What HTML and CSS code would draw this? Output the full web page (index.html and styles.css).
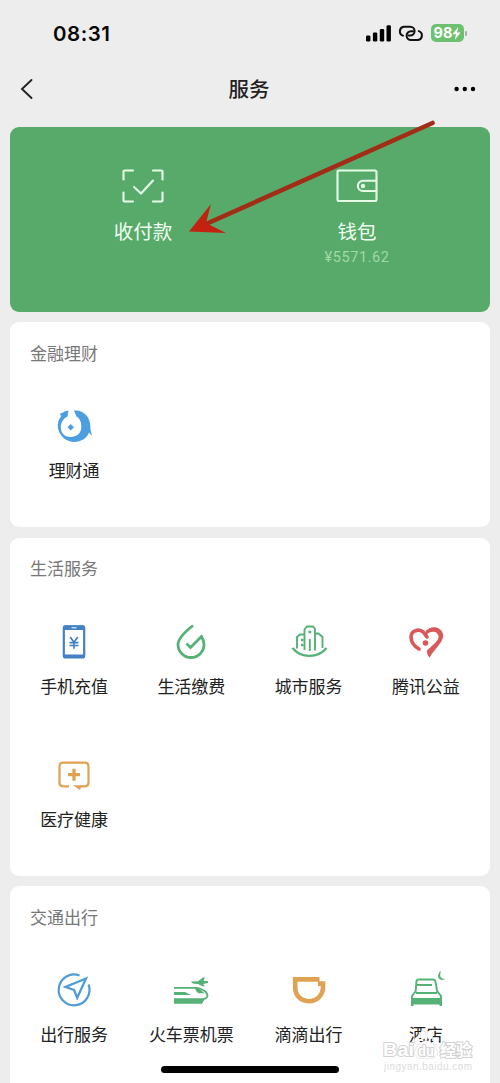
FILE: index.html
```html
<!DOCTYPE html>
<html lang="zh-CN">
<head>
<meta charset="utf-8">
<title>服务</title>
<link rel="stylesheet" href="styles.css">
</head>
<body>
<div class="screen">
  <header class="status">
    <span class="time">08:31</span>
    <div class="indicators">
      <svg class="signal" width="26" height="17" viewBox="0 0 26 17"><rect x="0" y="10.5" width="4.4" height="6" rx="1.3"/><rect x="6.9" y="7.5" width="4.4" height="9" rx="1.3"/><rect x="13.8" y="4" width="4.4" height="12.5" rx="1.3"/><rect x="20.5" y="0.3" width="4.4" height="16.2" rx="1.3"/></svg>
      <svg class="link" width="26" height="17" viewBox="0 0 26 17"><path d="M5 10.6A4.6 4.6 0 0 1 5.8 1.7H12.2A4.4 4.4 0 0 1 12.2 10.5H10.5"/><path d="M20.8 6.1A4.6 4.6 0 0 1 20 15H13A4.4 4.4 0 0 1 13 6.2H15"/></svg>
      <span class="battery"><span>98</span><svg width="9" height="13" viewBox="0 0 9 13"><path d="M6.2 0L0.4 7.2H4L2.8 13L8.6 5.6H5Z"/></svg></span><i class="nub"></i>
    </div>
  </header>
  <nav class="nav">
    <svg width="14" height="22" viewBox="0 0 14 22"><path class="back" d="M11.5 2L2 11L11.5 20"/></svg>
    <h1>服务</h1>
    <svg width="22" height="6" viewBox="0 0 22 6"><circle cx="2.6" cy="3" r="2.2"/><circle cx="10.8" cy="3" r="2.2"/><circle cx="19" cy="3" r="2.2"/></svg>
  </nav>
  <main class="cards">
    <section class="pay">
      <div class="pay-item">
        <svg width="44" height="36" viewBox="-22 -18 44 36"><path d="M-19.5 -6.5V-14.5Q-19.5 -15.5 -18.5 -15.5H-10M10 -15.5H18.5Q19.5 -15.5 19.5 -14.5V-6.5M19.5 6.5V14.5Q19.5 15.5 18.5 15.5H10M-10 15.5H-18.5Q-19.5 15.5 -19.5 14.5V6.5M-9 1L-2 7.5L10 -5.5"/></svg>
        <span class="pay-name">收付款</span>
      </div>
      <div class="pay-item">
        <svg width="44" height="36" viewBox="-22 -18 44 36"><rect x="-19.5" y="-15.5" width="39" height="30.5" rx="1.5"/><path d="M19 -5.2H6A5 5 0 0 0 6 5H19"/><circle class="dot" cx="6" cy="0" r="2.2"/></svg>
        <span class="pay-name">钱包</span>
        <span class="balance">¥5571.62</span>
      </div>
    </section>
    <section class="card">
      <h2>金融理财</h2>
      <div class="grid">
        <div class="item">
          <svg class="icon" viewBox="-22 -22 44 44"><path fill="#4b9fe0" d="M-5.5 -15.3C-9 -15.5 -11 -13 -14 -12.5L-13 -9.5C-16 -6 -17 -1 -15.5 4C-13.5 11 -7 16 0 16C7.5 16 13.5 11.5 15 6.5L18 10C17.5 7 16.3 4.5 16.3 0C16.3 -9 9 -16.5 0 -15.3L2.5 -9.5C6 -7.5 7.5 -3.5 7.3 1.5C7 7.5 2.5 11 -3.5 11C-9.5 11 -13 7 -13.2 1.5C-13.3 -3.5 -10.5 -7.5 -6.5 -9.5Z"/><path fill="#4b9fe0" d="M-3.3 -2L0 1.3L-3.3 4.6L-6.6 1.3Z"/></svg>
          <span>理财通</span>
        </div>
      </div>
    </section>
    <section class="card">
      <h2>生活服务</h2>
      <div class="grid">
        <div class="item">
          <svg class="icon blue" viewBox="-22 -22 44 44"><rect x="-10.2" y="-15.6" width="20.4" height="31" rx="2"/><path class="fill" d="M-10.5 -16.5H10.5V-12H-10.5ZM-10.5 12.5H10.5V16H-10.5Z"/><path stroke="#fff" stroke-width="1" d="M-2.5 -14.2H2.5"/><path stroke-width="1.7" d="M-3.8 -5L0 .2L3.8 -5M0 0V6.8M-4.5 .6H4.5M-4.5 3.5H4.5"/></svg>
          <span>手机充值</span>
        </div>
        <div class="item">
          <svg class="icon green" viewBox="-22 -22 44 44"><path stroke-width="2.8" d="M2 -16.5C-5 -11 -13 -4 -13 2.5A13 13 0 0 0 13 2.5C13 0 12 -3 10.5 -5.5L-.5 5.5L-4.5 1.5"/></svg>
          <span>生活缴费</span>
        </div>
        <div class="item">
          <svg class="icon green" viewBox="-22 -22 44 44"><path stroke-width="2.4" d="M-16.5 6C-8 16.5 9 16.5 17.5 6"/><path stroke-width="1.9" d="M-12 6.5V-5L-9 -7.5H-4.5M-4.5 8V-12.5L-2 -15.5H4L6 -13V8.5M6 -8.5H9.5L13.5 -5V6M.8 9V-3"/><path stroke-width="2.6" d="M-.5 -10H2.2M-8 -2H-5.5M-8 3H-5.5"/></svg>
          <span>城市服务</span>
        </div>
        <div class="item">
          <svg class="icon" viewBox="-22 -22 44 44"><path fill="none" stroke="#d9595b" stroke-width="3.6" stroke-linecap="round" d="M-7 7C-12 4 -15 -1 -15 -5C-15 -11 -8 -13.5 -3.5 -10.5C-1.5 -9 -.5 -7 1 -5"/><path fill="#d9595b" d="M-.5 -10.8C5 -17 15 -15.5 17 -8C18.5 0 8 7 3.5 15.8C1.5 13.5 1 11 .8 8.8C5 4 13.5 -1 12.5 -6C11.5 -11.5 4 -11.5 .5 -7Z"/><circle fill="#d9595b" cx="-.5" cy="1" r="2.8"/></svg>
          <span>腾讯公益</span>
        </div>
        <div class="item">
          <svg class="icon orange" viewBox="-22 -22 44 44"><path d="M-5 11.3H-11Q-14.5 11.3 -14.5 7.8V-8.8Q-14.5 -12.3 -11 -12.3H11Q14.5 -12.3 14.5 -8.8V7.8Q14.5 11.3 11 11.3H6"/><path class="fill" d="M-1 10.3H7.5L6 15Z"/><path stroke-width="3.3" d="M0 -6.3V5.7M-6 -.3H6"/></svg>
          <span>医疗健康</span>
        </div>
      </div>
    </section>
    <section class="card last">
      <h2>交通出行</h2>
      <div class="grid">
        <div class="item">
          <svg class="icon sky" viewBox="-22 -22 44 44"><path d="M5.5 -14.5A15.4 15.4 0 1 0 14.5 -5.5"/><path stroke-width="2.3" d="M12 -11.5L-8.5 -3L0 -.2L3.2 7.8Z"/></svg>
          <span>出行服务</span>
        </div>
        <div class="item">
          <svg class="icon green" viewBox="-22 -22 44 44"><path stroke-width="1.8" d="M-17 -2.2H6C12 -1.5 17 3 16.4 6.2C15.6 9.4 12 9.2 9 9.2H-17"/><path class="fill" d="M-17 9.2H13.5L11 13.8H-17ZM-17 2H-6L0 5H-17ZM4 -2.5H7L13.5 3.2H8Q4.5 2 4 -2.5ZM0 -8.5L7 -8.8L12 -12.5H14L12.5 -9.3L17 -8.8V-7L12 -6L14 -3.8H11.5L7 -6Q1 -5.8 0 -8.5Z"/></svg>
          <span>火车票机票</span>
        </div>
        <div class="item">
          <svg class="icon orange" viewBox="-22 -22 44 44"><path stroke-width="4.6" d="M10.5 -10.6H-13.8V-3C-13.8 6 -8 11.2 0 11.2C8 11.2 14 5 14 -3V-6.4H9"/></svg>
          <span>滴滴出行</span>
        </div>
        <div class="item">
          <svg class="icon green" viewBox="-22 -22 44 44"><path stroke-width="1.9" d="M-10.5 3L-9.5 -9Q-9.2 -10.5 -7 -10.5H7Q9 -10.5 9.3 -9L11.5 3M-10 -5H6M-10.5 1.5L-14 6V15M11.5 1.5L15 6V15M-10 3H11"/><path class="fill" d="M-15 8H16V16H13.5V14.5H-12.5V16H-15ZM15 -19C13 -13.5 15 -10.5 19.5 -11.5C15.5 -8 11 -11.5 12.3 -15.5Q13 -18.5 15 -19Z"/></svg>
          <span>酒店</span>
        </div>
      </div>
    </section>
  </main>
  <svg class="arrow" width="250" height="120" viewBox="186 118 250 120"><path class="shaft" d="M432.5 123L206 224"/><path class="head" d="M189 231.5L211 204L206 223L226 233Z"/></svg>
  <div class="watermark">
    <svg width="92" height="44" viewBox="382 1030 92 44"><g class="mark"><ellipse cx="417" cy="1041" rx="2.5" ry="3.5"/><ellipse cx="423" cy="1035" rx="2.8" ry="4"/><ellipse cx="430" cy="1035" rx="2.8" ry="4"/><ellipse cx="436" cy="1041" rx="2.5" ry="3.5"/><path d="M426 1041C420 1041 414 1049 415 1055C417 1060 435 1060 437 1055C438 1049 432 1041 426 1041Z"/><text x="383" y="1056" font-size="19" textLength="31" lengthAdjust="spacingAndGlyphs">Bai</text><text x="418" y="1056" font-size="14" textLength="16" lengthAdjust="spacingAndGlyphs">du</text><text x="440" y="1055.5" font-size="16" textLength="32">经验</text></g><text class="url" x="384" y="1069.5" textLength="88">jingyan.baidu.com</text></svg>
  </div>
  <div class="home"></div>
</div>
</body>
</html>
```

FILE: styles.css
```css
* { box-sizing: border-box; }
body {
  margin: 0;
  background: #ededed;
  color: #222;
  font-family: "Liberation Sans", "Noto Sans CJK SC", sans-serif;
}
.screen {
  position: relative;
  width: 500px;
  height: 1083px;
  overflow: hidden;
}
.status {
  display: flex;
  align-items: center;
  justify-content: space-between;
  height: 66px;
  padding: 0 33px 0 53px;
}
.time {
  padding-top: 2px;
  font: 600 20.5px/24px Inter, sans-serif;
  letter-spacing: .5px;
  color: #080808;
}
.indicators { display: flex; align-items: center; }
.link { margin: 0 7px 0 6px; fill: none; stroke: #111; stroke-width: 2; stroke-linecap: round; }
.battery {
  display: flex;
  align-items: center;
  justify-content: center;
  width: 33px;
  height: 18px;
  border-radius: 5px;
  background: #6cc070;
  color: #fff;
  fill: #fff;
  font: 700 14.5px/18px Inter, sans-serif;
}
.nub { width: 2px; height: 5px; margin-left: 1px; border-radius: 1px; background: #aaa; }
.nav {
  display: flex;
  align-items: center;
  justify-content: space-between;
  height: 44px;
  padding: 1px 24px 0 20px;
}
.nav h1 { margin: 2px 0 0 10px; font-size: 20.5px; line-height: 30px; font-weight: 500; }
.back { fill: none; stroke: #222; stroke-width: 1.9; stroke-linecap: round; }
.cards { display: grid; gap: 10.5px; padding: 17px 10px 0; }
.pay {
  display: grid;
  grid-template-columns: 214px 214px;
  justify-content: center;
  height: 184.5px;
  padding-top: 41px;
  border-radius: 9px;
  background: #58aa6b;
}
.pay-item { display: flex; flex-direction: column; align-items: center; color: #f0fff0; }
.pay-item svg { fill: none; stroke: #e6ffe5; stroke-width: 2.1; stroke-linecap: round; stroke-linejoin: round; }
.pay-item .dot { fill: #e6ffe5; stroke: none; }
.pay-name { margin-top: 14px; font-size: 19.5px; line-height: 28px; }
.balance {
  margin-top: 1px;
  font: 14.5px/22px Roboto, sans-serif;
  letter-spacing: .6px;
  color: #a0d9a4;
}
.card {
  padding: 20.5px 5.5px 43px;
  border-radius: 9px;
  background: #fff;
}
.card h2 { margin: 0 14.5px 37.5px; font-size: 17px; line-height: 24px; font-weight: 400; color: #777; }
.last { border-radius: 9px 9px 0 0; }
.grid { display: grid; grid-template-columns: repeat(4, 1fr); row-gap: 53px; }
.item {
  display: flex;
  flex-direction: column;
  align-items: center;
  gap: 12px;
  font-size: 17px;
  line-height: 24px;
  white-space: nowrap;
}
.icon { width: 44px; height: 44px; }
.blue, .green, .orange, .sky { fill: none; stroke: currentColor; stroke-width: 2.2; }
.fill { fill: currentColor; stroke: none; }
.blue { color: #4380c4; }
.green { color: #55b176; }
.orange { color: #dfa152; }
.sky { color: #519cd4; }
.item > span { color: #222; }
.arrow { position: absolute; left: 186px; top: 118px; }
.shaft { stroke: #a32c17; stroke-width: 4.6; stroke-linecap: round; }
.head { fill: #c32210; }
.watermark { position: absolute; left: 382px; top: 1030px; }
.mark { fill: #fff; stroke: #d2d2d2; stroke-width: 1; paint-order: stroke; font-family: "Liberation Sans", "Noto Sans CJK SC", sans-serif; font-weight: 700; }
.mark text { stroke-width: 2; }
.url { fill: #dcdcdc; font-family: "Liberation Sans", sans-serif; font-size: 10px; }
.home {
  position: absolute;
  left: 161px;
  top: 1066px;
  width: 178px;
  height: 7px;
  border-radius: 4px;
  background: #000;
}
```
